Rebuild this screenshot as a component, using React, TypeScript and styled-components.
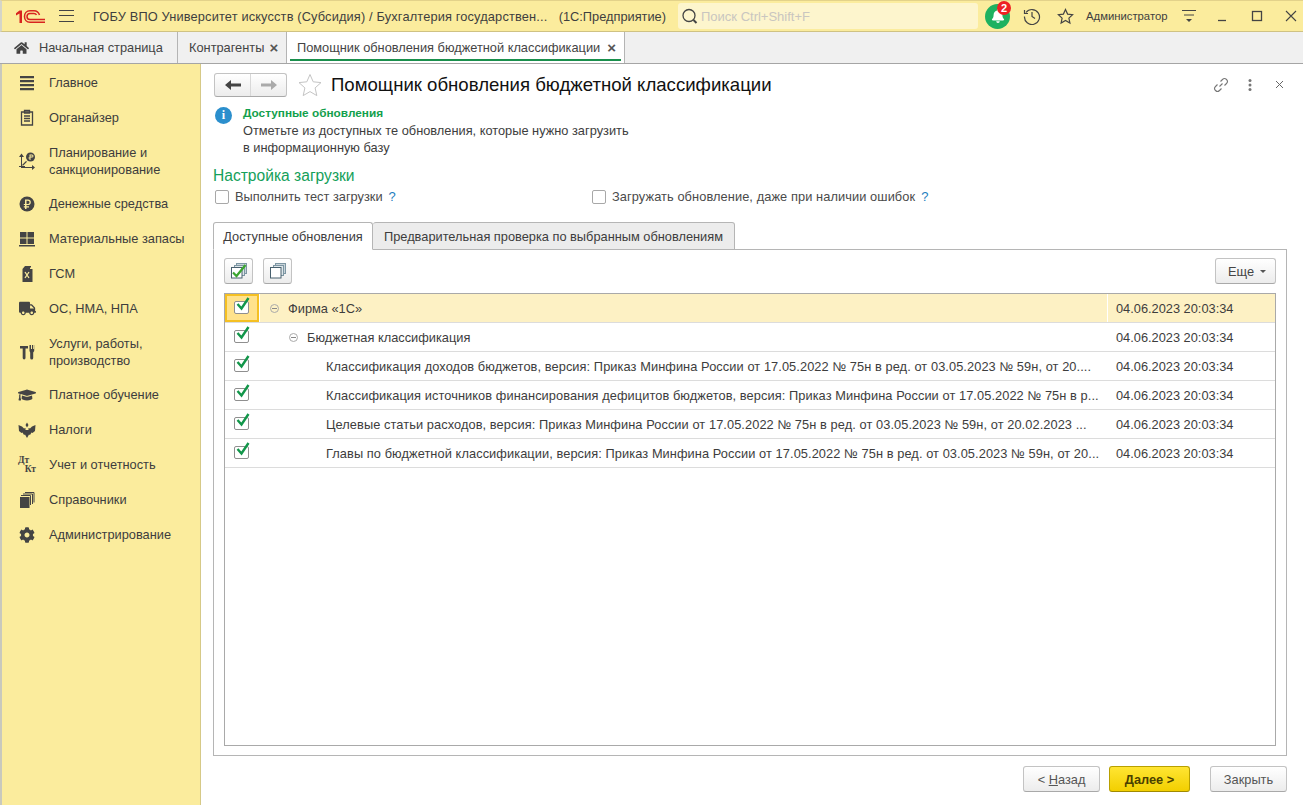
import React from 'react'
import styled, { createGlobalStyle } from 'styled-components'
import { FaHome, FaTruck, FaGraduationCap, FaCog, FaBell } from 'react-icons/fa'

const Global = createGlobalStyle`
	html, body { margin:0; padding:0; height:100%; overflow:hidden; }
	body { font-family:"Liberation Sans", Arial, sans-serif; font-size:12.8px; color:#333; background:#fff; }
	#root { height:100%; }
`

const Page = styled.div`
	width:1303px;
	height:805px;
	display:flex;
	flex-direction:column;
`

const TopBar = styled.div`
	flex:none;
	display:flex;
	align-items:center;
	background:#fbec9d;
	border-top:1px solid #e3d28a;
	border-bottom:1px solid #cfc283;
	border-left:2px solid #d5d5c8;
	height:30px;
`

const Logo = styled.svg`
	margin-left:14px;
	width:29px;
	height:13px;
	flex:none;
`

const Burger = styled.svg`
	margin-left:14px;
	width:15px;
	height:12px;
	flex:none;
`

const AppTitle = styled.div`
	margin-left:19px;
	width:573px;
	flex:none;
	font-size:12.8px;
	color:#3f3f3f;
	white-space:nowrap;
	display:flex;
	justify-content:space-between;
`

const AppName = styled.span`
	letter-spacing:.15px;
`

const Search = styled.div`
	margin-left:12px;
	width:300px;
	height:26px;
	flex:none;
	background:#fdf5cd;
	border-radius:3px;
	display:flex;
	align-items:center;
	gap:3px;
	padding-left:3px;
	box-sizing:border-box;
	color:#c9c6c0;
	font-size:13px;
`

const Bell = styled.div`
	position:relative;
	margin-left:7px;
	width:25px;
	height:25px;
	flex:none;
	border-radius:50%;
	background:#1eb160;
	display:flex;
	align-items:center;
	justify-content:center;
	color:#fff;
`

const Badge = styled.span`
	position:absolute;
	top:-3px;
	right:-1px;
	width:14px;
	height:14px;
	border-radius:50%;
	background:#ee2024;
	color:#fff;
	font-size:11px;
	font-weight:bold;
	line-height:14px;
	text-align:center;
`

const TopIcon = styled.svg<{ $ml: number }>`
	margin-left:${({ $ml }) => $ml}px;
	flex:none;
`

const UserName = styled.div`
	margin-left:12px;
	width:83px;
	flex:none;
	font-size:11.3px;
	color:#3f3f3f;
	white-space:nowrap;
`

const TabBar = styled.div`
	height:31px;
	flex:none;
	display:flex;
	background:#f0f0f0;
	border-bottom:1px solid #a5a5a5;
`

const PageTab = styled.div<{ $active?: boolean; $width: number; $pad: number }>`
	position:relative;
	width:${({ $width }) => $width}px;
	padding-left:${({ $pad }) => $pad}px;
	box-sizing:border-box;
	display:flex;
	align-items:center;
	font-size:12.8px;
	color:#444;
	white-space:nowrap;
	background:${({ $active }) => ($active ? '#fff' : 'transparent')};
	border-right:1px solid #b4b4b4;
	${({ $active }) => $active && `
		&::after {
			content:'';
			position:absolute;
			left:3px;
			right:3px;
			bottom:2px;
			height:2px;
			background:#1a8f4c;
		}
	`}
`

const TabClose = styled.span<{ $ml: number }>`
	margin-left:${({ $ml }) => $ml}px;
	font-size:15px;
	font-weight:bold;
	color:#555;
`

const HomeIcon = styled(FaHome)`
	width:15px;
	height:14px;
	margin-right:10px;
	color:#444;
`

const Body = styled.div`
	flex:1;
	display:flex;
	min-height:0;
`

const Sidebar = styled.nav`
	width:201px;
	flex:none;
	box-sizing:border-box;
	background:#fbec9d;
	border-left:2px solid #c9c9bd;
	border-right:1px solid #d6c987;
	padding-top:1px;
`

const NavItem = styled.div<{ $double?: boolean }>`
	display:flex;
	align-items:center;
	padding:${({ $double }) => ($double ? '8.5px' : '9px')} 10px ${({ $double }) => ($double ? '8.5px' : '9px')} 0;
	line-height:17px;
	font-size:12.8px;
	color:#3d3d3d;
`

const NavIconBox = styled.div`
	width:47px;
	height:17px;
	flex:none;
	display:flex;
	align-items:center;
	justify-content:center;
	padding-left:3px;
	box-sizing:border-box;
	color:#444;
`

const DtKt = styled.div`
	width:18px;
	font-family:"Liberation Serif", serif;
	font-size:9.5px;
	font-weight:bold;
	line-height:8.5px;
	span { display:block; }
	span:last-child { text-align:right; }
`

const Main = styled.main`
	flex:1;
	min-width:0;
	display:flex;
	flex-direction:column;
	padding:8px 16px 13px 12px;
	box-sizing:border-box;
`

const Header = styled.div`
	display:flex;
	align-items:center;
	height:25px;
	flex:none;
`

const NavButtons = styled.div`
	margin-left:1px;
	width:73px;
	height:24px;
	box-sizing:border-box;
	display:flex;
	border:1px solid #c3c3c3;
	border-bottom-color:#a9a9a9;
	border-radius:3px;
	background:linear-gradient(#fff, #ececec);
`

const NavButton = styled.div<{ $last?: boolean }>`
	flex:1;
	display:flex;
	align-items:center;
	justify-content:center;
	${({ $last }) => !$last && 'border-right:1px solid #d8d8d8;'}
`

const StarIcon = styled.svg`
	margin-left:11px;
	flex:none;
`

const Title = styled.h1`
	margin:0 0 0 9px;
	font-size:18.6px;
	font-weight:normal;
	color:#111;
	white-space:nowrap;
	flex:1;
`

const HeaderTools = styled.div`
	display:flex;
	align-items:center;
	gap:19px;
	color:#777;
`

const Info = styled.div`
	display:flex;
	margin:9px 0 0 2px;
	flex:none;
`

const InfoIcon = styled.div`
	width:17px;
	height:17px;
	flex:none;
	margin-top:1px;
	border-radius:50%;
	background:#2b8fcd;
	color:#fff;
	font-weight:bold;
	font-size:12px;
	line-height:17px;
	text-align:center;
	font-family:"Liberation Serif", serif;
`

const InfoBody = styled.div`
	margin-left:11px;
	font-size:12.8px;
	line-height:16.5px;
	color:#3d3d3d;
`

const InfoTitle = styled.div`
	font-size:11.8px;
	font-weight:bold;
	color:#12a04c;
	margin-bottom:2px;
	line-height:15px;
`

const SectionTitle = styled.h2`
	margin:11px 0 0;
	font-size:15.6px;
	line-height:18px;
	font-weight:normal;
	color:#14a05a;
	flex:none;
`

const OptionRow = styled.div`
	display:flex;
	align-items:center;
	margin:3px 0 0 2px;
	height:17px;
	flex:none;
`

const Option = styled.label<{ $width: number; $spacing?: number }>`
	width:${({ $width }) => $width}px;
	display:flex;
	align-items:center;
	font-size:12.8px;
	letter-spacing:${({ $spacing }) => $spacing ?? 0}px;
	color:#4a4a4a;
	white-space:nowrap;
`

const EmptyBox = styled.span`
	width:14px;
	height:14px;
	box-sizing:border-box;
	border:1px solid #a8a8a8;
	border-radius:2px;
	background:#fff;
	margin-right:6px;
	flex:none;
`

const Help = styled.span`
	margin-left:6px;
	color:#1f7fc0;
	font-size:13px;
`

const Tabs = styled.div`
	display:flex;
	margin-top:17px;
	height:28px;
	flex:none;
	position:relative;
	z-index:1;
`

const FormTab = styled.div<{ $active?: boolean; $width: number }>`
	width:${({ $width }) => $width}px;
	box-sizing:border-box;
	display:flex;
	align-items:center;
	justify-content:center;
	font-size:12.8px;
	color:#3d3d3d;
	white-space:nowrap;
	border:1px solid #b5b5b5;
	border-left-width:${({ $active }) => ($active ? 1 : 0)}px;
	border-radius:3px 3px 0 0;
	background:${({ $active }) => ($active ? '#fff' : '#ececec')};
	border-bottom-color:${({ $active }) => ($active ? '#fff' : '#b5b5b5')};
`

const Panel = styled.div`
	flex:1;
	min-height:0;
	margin-top:-1px;
	border:1px solid #b5b5b5;
	padding:8px 10px 9px 10px;
	box-sizing:border-box;
	display:flex;
	flex-direction:column;
`

const Toolbar = styled.div`
	display:flex;
	gap:10px;
	height:26px;
	flex:none;
`

const ToolButton = styled.div`
	width:29px;
	height:26px;
	box-sizing:border-box;
	border:1px solid #c3c3c3;
	border-bottom-color:#a9a9a9;
	border-radius:3px;
	background:linear-gradient(#fff, #ececec);
	display:flex;
	align-items:center;
	justify-content:center;
`

const MoreButton = styled(ToolButton)`
	width:61px;
	margin-left:auto;
	font-size:12.8px;
	color:#444;
	gap:6px;
	padding-left:3px;
`

const Caret = styled.span`
	width:0;
	height:0;
	border-left:3px solid transparent;
	border-right:3px solid transparent;
	border-top:3px solid #555;
`

const Table = styled.div`
	flex:1;
	min-height:0;
	margin-top:9px;
	border:1px solid #a9a9a9;
`

const Row = styled.div<{ $selected?: boolean }>`
	height:29px;
	box-sizing:border-box;
	display:flex;
	align-items:stretch;
	border-bottom:1px solid #dcdcdc;
	font-size:12.8px;
	color:#3d3d3d;
	background:${({ $selected }) => ($selected ? '#fdf1c4' : '#fff')};
`

const CheckCell = styled.div<{ $focus?: boolean }>`
	width:34px;
	flex:none;
	box-sizing:border-box;
	display:flex;
	align-items:center;
	padding:0 0 2px 9px;
	background:#fff;
	${({ $focus }) => $focus && `
		border:2px solid #f5c023;
		background:#ffe28c;
		padding:0 0 2px 7px;
		box-shadow:1px 0 0 #fff;
	`}
`

const Check = styled.span`
	position:relative;
	width:15px;
	height:13px;
	box-sizing:border-box;
	border:1px solid #8f8f8f;
	border-radius:2px;
	background:#fff;
	display:block;
	svg {
		position:absolute;
		left:1px;
		top:-5px;
	}
`

const TreeCell = styled.div<{ $indent: number }>`
	flex:1;
	min-width:0;
	display:flex;
	align-items:center;
	padding-left:${({ $indent }) => $indent}px;
	box-sizing:border-box;
	overflow:hidden;
`

const Toggle = styled.span`
	width:9px;
	height:9px;
	flex:none;
	box-sizing:border-box;
	border:1px solid #aaa;
	border-radius:50%;
	margin-right:9px;
	position:relative;
	&::after {
		content:'';
		position:absolute;
		left:1px;
		right:1px;
		top:3px;
		height:1px;
		background:#888;
	}
`

const RowText = styled.span<{ $leaf: boolean }>`
	white-space:nowrap;
	letter-spacing:${({ $leaf }) => ($leaf ? '.08px' : '0')};
`

const DateCell = styled.div<{ $selected?: boolean }>`
	width:168px;
	flex:none;
	box-sizing:border-box;
	display:flex;
	align-items:center;
	padding-left:8px;
	border-left:1px solid ${({ $selected }) => ($selected ? '#fff' : 'transparent')};
`

const Footer = styled.div`
	display:flex;
	justify-content:flex-end;
	margin-top:10px;
	height:26px;
	flex:none;
`

const FootButton = styled.div<{ $primary?: boolean; $width: number; $ml: number }>`
	width:${({ $width }) => $width}px;
	margin-left:${({ $ml }) => $ml}px;
	box-sizing:border-box;
	display:flex;
	align-items:center;
	justify-content:center;
	font-size:12.8px;
	border-radius:3px;
	border:1px solid ${({ $primary }) => ($primary ? '#b8a000' : '#c3c3c3')};
	border-bottom-color:${({ $primary }) => ($primary ? '#a08a00' : '#a9a9a9')};
	background:${({ $primary }) => ($primary ? 'linear-gradient(#ffe533, #f2cf00)' : 'linear-gradient(#fff, #ececec)')};
	color:${({ $primary }) => ($primary ? '#4a4000' : '#555')};
	font-weight:${({ $primary }) => ($primary ? 'bold' : 'normal')};
	white-space:pre;
	u { text-underline-offset:1px; }
`

const ic = { width: 20, height: 18, viewBox: '0 0 20 18', fill: 'currentColor' }

const navItems: { icon: React.ReactNode; label: React.ReactNode; double?: boolean }[] = [
	{
		label: 'Главное',
		icon: <svg {...ic}><path d="M3 2h14v2.200H3zM3 6h14v2.200H3zM3 10h14v2.200H3zM3 14h14v2.200H3z" /></svg>,
	},
	{
		label: 'Органайзер',
		icon: <svg {...ic} fill="none" stroke="currentColor" strokeWidth="1.300"><path d="M4.500 3h11v13h-11z" /><path d="M7.500 1.500h5V4h-5zM7 7h6M7 9.500h6M7 12h6" /></svg>,
	},
	{
		label: <>Планирование и<br />санкционирование</>,
		double: true,
		icon: (
			<svg {...ic}>
				<path d="M4 4h1v11h10v1H4z" />
				<path d="M4.500 1.500 7 5H2zM18 15.500 15 18v-5zM2 14h6v1H2zM5 13l4-4 1 .8-4 4z" />
				<circle cx="13.500" cy="5" r="4.500" />
				<path d="M12.500 2.500h2.500a1.500 1.500 0 0 1 0 3h-1.500V8h-1V6.500h-1v-1h1zM13.500 3.500v1h1.500a.5.5 0 0 0 0-1z" fill="#fbec9d" />
			</svg>
		),
	},
	{
		label: 'Денежные средства',
		icon: (
			<svg {...ic}>
				<circle cx="10" cy="9" r="7.500" />
				<path d="M8 4.500h3a2.800 2.800 0 0 1 0 5.600H9.500v1.100H12v1.200H9.500V14H8v-1.600H6.800v-1.200H8v-1.100H6.800V8.900H8zM9.500 5.800v3.100H11a1.550 1.550 0 0 0 0-3.100z" fill="#fbec9d" />
			</svg>
		),
	},
	{
		label: 'Материальные запасы',
		icon: <svg {...ic}><path d="M3 2h6.500v5.500H3zM10.500 2H17v5.500h-6.500zM3 8.500h6.500V14H3zM10.500 8.500H17V14h-6.500zM2 15h16v1.500H2z" /></svg>,
	},
	{
		label: 'ГСМ',
		icon: (
			<svg {...ic}>
				<path d="M5.500 4 8 1h6v1.500h-1V4h2.500v13h-10z" />
				<path d="m8 7 4 6M12 7l-4 6" stroke="#fbec9d" strokeWidth="1.300" />
			</svg>
		),
	},
	{ label: 'ОС, НМА, НПА', icon: <FaTruck size={17} /> },
	{
		label: <>Услуги, работы,<br />производство</>,
		double: true,
		icon: (
			<svg {...ic}>
				<path d="M3 3h8v2.500H8.500V15a1.400 1.400 0 0 1-2.800 0V5.500H3z" />
				<path d="M13 2h1v4h1V2h1.200v4H17V2h.2v6l-1 1.500V15a1.500 1.500 0 0 1-3 0V9.500L12.500 8V2z" />
			</svg>
		),
	},
	{ label: 'Платное обучение', icon: <FaGraduationCap size={18} /> },
	{
		label: 'Налоги',
		icon: (
			<svg {...ic}>
				<path d="M10 1.500 11.500 4 10 6.500 8.500 4zM1.500 4 5 5.500l2 2 1.500-.5v2h3V7l1.500.5 2-2L18.500 4 18 10l-2.500 2-1-.5L13 14l-1-.5-2 3.500-2-3.500-1 .5-1.500-2.500-1 .5L2 10z" />
			</svg>
		),
	},
	{
		label: 'Учет и отчетность',
		icon: <DtKt><span>Дт</span><span>Кт</span></DtKt>,
	},
	{
		label: 'Справочники',
		icon: (
			<svg {...ic}>
				<path d="M3 6h9.500v11H3z" />
				<path d="M5 4.500h9.500V14M7 3h9.500v10M9 1.500h9v10" fill="none" stroke="currentColor" transform="translate(-1 0)" />
			</svg>
		),
	},
	{ label: 'Администрирование', icon: <FaCog size={16} /> },
]

const rows = [
	{ indent: 11, toggle: true, text: 'Фирма «1С»', selected: true },
	{ indent: 30, toggle: true, text: 'Бюджетная классификация' },
	{ indent: 67, text: 'Классификация доходов бюджетов, версия: Приказ Минфина России от 17.05.2022 № 75н в ред. от 03.05.2023 № 59н, от 20....' },
	{ indent: 67, text: 'Классификация источников финансирования дефицитов бюджетов, версия: Приказ Минфина России от 17.05.2022 № 75н в р...' },
	{ indent: 67, text: 'Целевые статьи расходов, версия: Приказ Минфина России от 17.05.2022 № 75н в ред. от 03.05.2023 № 59н, от 20.02.2023 ...' },
	{ indent: 67, text: 'Главы по бюджетной классификации, версия: Приказ Минфина России от 17.05.2022 № 75н в ред. от 03.05.2023 № 59н, от 20...' },
]

const StackIcon = ({ checked }: { checked?: boolean }) => (
	<svg width="20" height="18" viewBox="0 0 20 18">
		<rect x="7.500" y="1.500" width="10" height="10" fill="#c7d3d9" stroke="#7d96a3" />
		<rect x="5.500" y="3.500" width="10" height="10" fill="#dde5e9" stroke="#7d96a3" />
		<rect x="2.500" y="5.500" width="10.500" height="10.500" fill="#fff" stroke="#48606e" />
		{checked && <path d="m4 10.500 3.500 3.500L16.500 3" fill="none" stroke="#3aa52f" strokeWidth="2.200" />}
	</svg>
)

const App = () => {
	return (
		<Page>
			<Global />
			<TopBar>
				<Logo viewBox="0 0 29 13">
					<path d="M0 3.200 3.500 .5H6V13H3.500V3.500L0 5.500z" fill="#d8231f" />
					<path d="M23.500 5C22.500 2 20.500 .8 18 .8h-4C10.500 .8 8.500 3.500 8.500 6.500s2 5.700 5.500 5.700h15M20.500 5c-.5-1-1.500-1.600-2.500-1.600h-4c-2 0-3 1.500-3 3.100s1 3.100 3 3.100h15" fill="none" stroke="#d8231f" strokeWidth="1.500" />
				</Logo>
				<Burger viewBox="0 0 15 12" stroke="#444"><path d="M0 .5h15M0 5.500h15M0 11.500h15" /></Burger>
				<AppTitle>
					<AppName>ГОБУ ВПО Университет искусств (Субсидия) / Бухгалтерия государствен...</AppName>
					<span>(1С:Предприятие)</span>
				</AppTitle>
				<Search>
					<svg width="17" height="17" viewBox="0 0 17 17" fill="none" stroke="#444" strokeWidth="1.300">
						<circle cx="8" cy="7.500" r="6" />
						<path d="m12.500 12 3 3" strokeWidth="2" />
					</svg>
					<span>Поиск Ctrl+Shift+F</span>
				</Search>
				<Bell>
					<FaBell size={14} />
					<Badge>2</Badge>
				</Bell>
				<TopIcon $ml={13} width="18" height="18" viewBox="0 0 18 18" fill="none" stroke="#444" strokeWidth="1.200">
					<path d="M3 5.500A7.500 7.500 0 1 1 1.500 9.500M1.500 3v3.500H5M9 5v4.500l3 2" />
				</TopIcon>
				<TopIcon $ml={16} width="17" height="17" viewBox="0 0 17 17" fill="none" stroke="#444" strokeWidth="1.200">
					<path d="m8.500 1.500 2.100 4.600 5 .6-3.700 3.400 1 4.900-4.400-2.500-4.400 2.500 1-4.900L1.400 6.700l5-.6z" />
				</TopIcon>
				<UserName>Администратор</UserName>
				<TopIcon $ml={12} width="16" height="14" viewBox="0 0 16 14" stroke="#444" fill="none">
					<path d="M1 1.500h14M3 6h10" />
					<path d="M5 10h6l-3 3z" fill="#444" stroke="none" />
				</TopIcon>
				<TopIcon $ml={19} width="12" height="12" viewBox="0 0 12 12" stroke="#444" strokeWidth="1.300"><path d="M2 10.500h8" /></TopIcon>
				<TopIcon $ml={23} width="12" height="12" viewBox="0 0 12 12" stroke="#444" strokeWidth="1.300" fill="none"><rect x="1.500" y="1.500" width="9" height="9" /></TopIcon>
				<TopIcon $ml={22} width="12" height="12" viewBox="0 0 12 12" stroke="#444" strokeWidth="1.100"><path d="m1 1 10 10M11 1 1 11" /></TopIcon>
			</TopBar>
			<TabBar>
				<PageTab $width={178} $pad={14}><HomeIcon />Начальная страница</PageTab>
				<PageTab $width={109} $pad={11}>Контрагенты<TabClose $ml={5}>×</TabClose></PageTab>
				<PageTab $active $width={338} $pad={10}>Помощник обновления бюджетной классификации<TabClose $ml={7}>×</TabClose></PageTab>
			</TabBar>
			<Body>
				<Sidebar>
					{navItems.map((item, i) => (
						<NavItem key={i} $double={item.double}>
							<NavIconBox>{item.icon}</NavIconBox>
							<div>{item.label}</div>
						</NavItem>
					))}
				</Sidebar>
				<Main>
					<Header>
						<NavButtons>
							<NavButton>
								<svg width="16" height="12" viewBox="0 0 16 12" fill="#444"><path d="M0 6 6 1v3.500h10v3H6V11z" /></svg>
							</NavButton>
							<NavButton $last>
								<svg width="16" height="12" viewBox="0 0 16 12" fill="#aaa"><path d="M16 6 10 1v3.500H0v3h10V11z" /></svg>
							</NavButton>
						</NavButtons>
						<StarIcon width="24" height="24" viewBox="0 0 24 24" fill="none" stroke="#c4c4c4">
							<path d="m12 1.500 3.200 7.300 7.800.8-5.900 5.300 1.700 7.700-6.800-4-6.800 4 1.700-7.700L1 9.600l7.800-.8z" />
						</StarIcon>
						<Title>Помощник обновления бюджетной классификации</Title>
						<HeaderTools>
							<svg width="16" height="16" viewBox="0 0 16 16" fill="none" stroke="#777" strokeWidth="1.100">
								<path d="m6.500 9.500 3-3M7.500 4.500l2-2a2.800 2.800 0 0 1 4 4l-2 2M8.500 11.500l-2 2a2.800 2.800 0 0 1-4-4l2-2" />
							</svg>
							<svg width="4" height="14" viewBox="0 0 4 14" fill="#777"><circle cx="2" cy="2.500" r="1.500" /><circle cx="2" cy="7" r="1.500" /><circle cx="2" cy="11.500" r="1.500" /></svg>
							<svg width="16" height="10" viewBox="0 0 16 10" stroke="#666"><path d="m5 1 7 7M12 1 5 8" /></svg>
						</HeaderTools>
					</Header>
					<Info>
						<InfoIcon>i</InfoIcon>
						<InfoBody>
							<InfoTitle>Доступные обновления</InfoTitle>
							Отметьте из доступных те обновления, которые нужно загрузить<br />
							в информационную базу
						</InfoBody>
					</Info>
					<SectionTitle>Настройка загрузки</SectionTitle>
					<OptionRow>
						<Option $width={377}><EmptyBox />Выполнить тест загрузки<Help>?</Help></Option>
						<Option $width={400} $spacing={0.09}><EmptyBox />Загружать обновление, даже при наличии ошибок<Help>?</Help></Option>
					</OptionRow>
					<Tabs>
						<FormTab $active $width={160}>Доступные обновления</FormTab>
						<FormTab $width={362}>Предварительная проверка по выбранным обновлениям</FormTab>
					</Tabs>
					<Panel>
						<Toolbar>
							<ToolButton><StackIcon checked /></ToolButton>
							<ToolButton><StackIcon /></ToolButton>
							<MoreButton>Еще<Caret /></MoreButton>
						</Toolbar>
						<Table>
							{rows.map((row, i) => (
								<Row key={i} $selected={row.selected}>
									<CheckCell $focus={row.selected}>
										<Check>
											<svg width="14" height="14" viewBox="0 0 14 14" fill="none" stroke="#12964a" strokeWidth="2.400"><path d="m1.500 7 4 4.500L12.500 1" /></svg>
										</Check>
									</CheckCell>
									<TreeCell $indent={row.indent}>
										{row.toggle && <Toggle />}
										<RowText $leaf={!row.toggle}>{row.text}</RowText>
									</TreeCell>
									<DateCell $selected={row.selected}>04.06.2023 20:03:34</DateCell>
								</Row>
							))}
						</Table>
					</Panel>
					<Footer>
						<FootButton $width={77} $ml={0}>{'< '}<u>Н</u>азад</FootButton>
						<FootButton $primary $width={81} $ml={9}><u>Д</u>алее {'>'}</FootButton>
						<FootButton $width={77} $ml={20}>Закрыть</FootButton>
					</Footer>
				</Main>
			</Body>
		</Page>
	)
}

export default App
